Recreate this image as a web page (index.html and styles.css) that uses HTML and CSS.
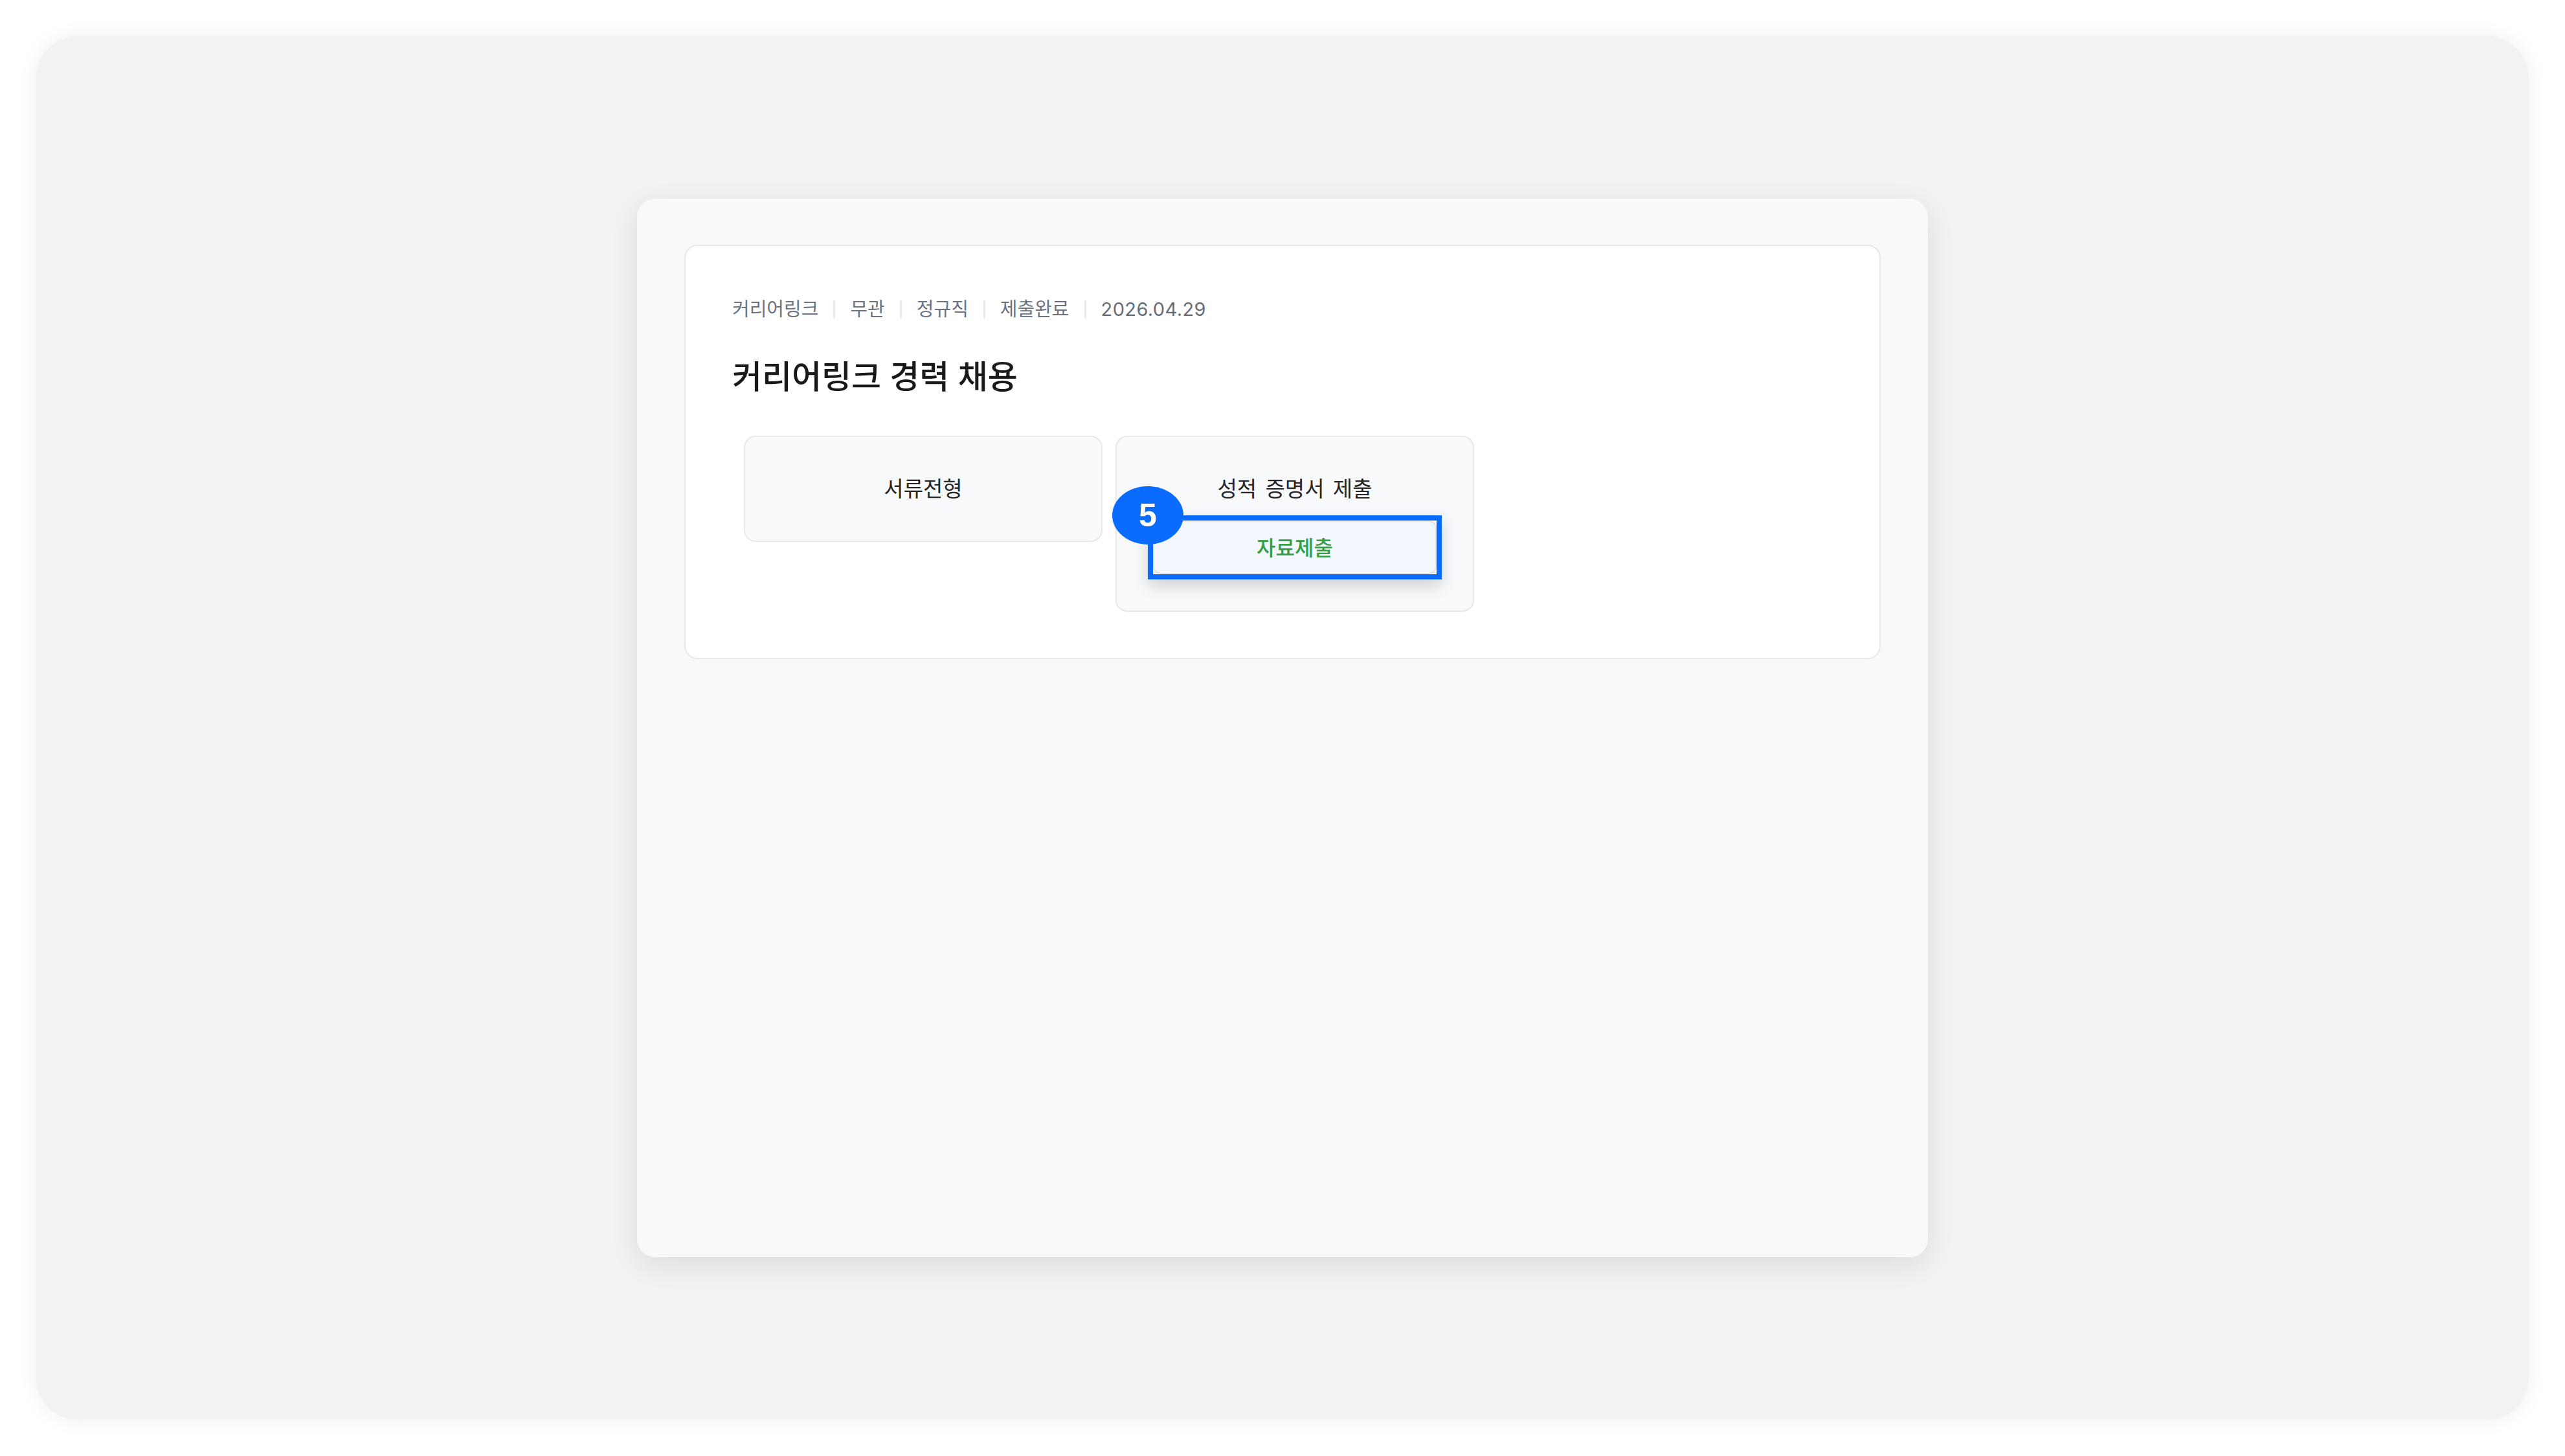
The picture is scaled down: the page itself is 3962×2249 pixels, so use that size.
FILE: index.html
```html
<!DOCTYPE html>
<html lang="ko">
<head>
    <meta charset="UTF-8">
    <meta name="viewport" content="width=device-width, initial-scale=1.0">
    <title>지원 현황 - 커리어링크</title>
    <link rel="stylesheet" href="styles.css">
</head>
<body>

    <div class="frame">
        <div class="panel">
            <div class="apply-card">
                <!-- 공고 요약 -->
                <div class="meta">
                    <span>커리어링크</span>
                    <i class="sep"></i>
                    <span>무관</span>
                    <i class="sep"></i>
                    <span>정규직</span>
                    <i class="sep"></i>
                    <span>제출완료</span>
                    <i class="sep"></i>
                    <span class="date">2026.04.29</span>
                </div>

                <h2 class="title">커리어링크 경력 채용</h2>

                <!-- 전형 단계 -->
                <div class="steps">
                    <div class="step">
                        <p class="step-name">서류전형</p>
                    </div>
                    <div class="step">
                        <p class="step-name">성적 증명서 제출</p>
                        <div class="focus">
                            <span class="badge">5</span>
                            <button type="button" class="btn-submit">자료제출</button>
                        </div>
                    </div>
                </div>
            </div>
        </div>
    </div>

</body>
</html>
```

FILE: styles.css
```css
/* --- 기본 설정 --- */
:root {
    --frame-bg: #f2f2f2;
    --panel-bg: #f8f9fb;
    --surface: #ffffff;
    --line: #e6e8ec;
    --text-main: #1c1c1e;
    --text-sub: #6b7280;
    --accent: #0a6cff;
    --ok: #34a043;
}
* { margin: 0; padding: 0; box-sizing: border-box; }
body {
    font-family: Inter, "Noto Sans CJK KR", sans-serif;
    background: #fff;
    color: var(--text-main);
    height: 100vh;
    padding: 56px;
}

/* --- 바깥 프레임과 패널 --- */
.frame {
    height: 100%;
    background: var(--frame-bg);
    border-radius: 64px;
    box-shadow: 0 0 32px rgba(0, 0, 0, 0.06);
    display: flex;
    align-items: center;
    justify-content: center;
}
.panel {
    width: 1994px;
    height: 1635px;
    background: var(--panel-bg);
    border-radius: 28px;
    box-shadow: 0 12px 44px rgba(0, 0, 0, 0.09);
    padding: 71px 73px;
}

/* --- 지원 카드 --- */
.apply-card {
    background: var(--surface);
    border: 2px solid var(--line);
    border-radius: 20px;
    padding: 78px 72px 71px;
}
.meta {
    display: flex;
    align-items: center;
    gap: 23px;
    font-size: 29px;
    line-height: 40px;
    color: var(--text-sub);
}
.meta .sep { width: 3px; height: 28px; background: #e8eaee; }
.meta .date { color: #666d78; letter-spacing: 0.4px; }

.title {
    margin-top: 54px;
    font-size: 50px;
    line-height: 60px;
    font-weight: 500;
    color: #1a1a1a;
}

/* --- 전형 단계 --- */
.steps {
    display: flex;
    align-items: flex-start;
    gap: 20px;
    margin: 61px 0 0 18px;
}
.step {
    width: 554px;
    background: var(--panel-bg);
    border: 2px solid var(--line);
    border-radius: 18px;
    padding: 56px;
    text-align: center;
}
.step-name { font-size: 33px; line-height: 48px; color: #262626; word-spacing: 4px; }

/* 강조 표시된 제출 버튼 */
.focus {
    position: relative;
    margin: 17px -8px -8px;
    border: 8px solid var(--accent);
    box-shadow: 0 10px 22px rgba(0, 0, 0, 0.16);
}
.btn-submit {
    display: block;
    width: 100%;
    height: 83px;
    padding-bottom: 4px;
    background: #f3f7fe;
    border: 2px solid #dfe5ee;
    border-radius: 12px;
    font-family: inherit;
    font-size: 32px;
    font-weight: 500;
    color: var(--ok);
    cursor: pointer;
}
.badge {
    position: absolute;
    left: -63px;
    top: -53px;
    width: 110px;
    height: 90px;
    border-radius: 50%;
    background: var(--accent);
    color: #fff;
    font-family: "Liberation Sans", Arial, sans-serif;
    font-weight: 700;
    font-size: 50px;
    display: flex;
    align-items: center;
    justify-content: center;
}
```
